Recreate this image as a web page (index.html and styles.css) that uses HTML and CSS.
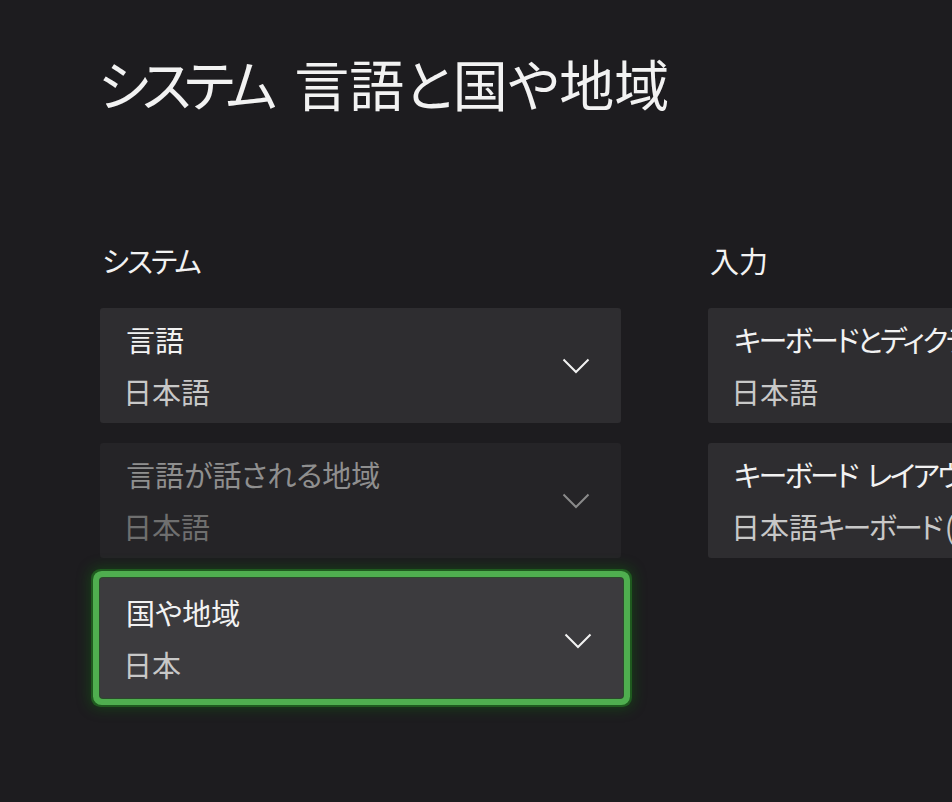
FILE: index.html
```html
<!DOCTYPE html>
<html lang="ja">
<head>
<meta charset="utf-8">
<title>システム 言語と国や地域</title>
<link rel="stylesheet" href="styles.css">
</head>
<body>
<div class="page">
  <h1 class="title"><span class="kana">システム</span><span>言語と国や地域</span></h1>
  <div class="columns">
    <section class="column">
      <h2 class="heading"><span class="kana">システム</span></h2>
      <div class="list">
        <div class="card">
          <div class="texts">
            <div class="label">言語</div>
            <div class="value">日本語</div>
          </div>
          <svg class="chev" width="28" height="16" viewBox="0 0 28 16"><path d="M1.5 1.5 L14 14 L26.5 1.5" fill="none" stroke="#f2f2f2" stroke-width="2"/></svg>
        </div>
        <div class="card disabled">
          <div class="texts">
            <div class="label">言語が話される地域</div>
            <div class="value">日本語</div>
          </div>
          <svg class="chev" width="28" height="16" viewBox="0 0 28 16"><path d="M1.5 1.5 L14 14 L26.5 1.5" fill="none" stroke="#8a8a8a" stroke-width="2"/></svg>
        </div>
        <div class="card focused">
          <div class="texts">
            <div class="label">国や地域</div>
            <div class="value">日本</div>
          </div>
          <svg class="chev" width="28" height="16" viewBox="0 0 28 16"><path d="M1.5 1.5 L14 14 L26.5 1.5" fill="none" stroke="#f2f2f2" stroke-width="2"/></svg>
        </div>
      </div>
    </section>
    <section class="column">
      <h2 class="heading">入力</h2>
      <div class="list">
        <div class="card">
          <div class="texts">
            <div class="label kana-tight">キーボードとディクテーション</div>
            <div class="value">日本語</div>
          </div>
        </div>
        <div class="card">
          <div class="texts">
            <div class="label kana-tight spaced">キーボード レイアウト</div>
            <div class="value">日本語<span class="kana-tight">キーボード (106/109 キー)</span></div>
          </div>
        </div>
      </div>
    </section>
  </div>
</div>
</body>
</html>
```
FILE: styles.css
```css
html, body {
  margin: 0;
  padding: 0;
  background: #1d1c1f;
  overflow: hidden;
  width: 952px;
  height: 802px;
}
body {
  font-family: "Noto Sans CJK JP", "Noto Sans", sans-serif;
  color: #f2f2f2;
}
.page {
  padding: 50px 0 0 100px;
}
.title {
  margin: 0 0 0 -2px;
  font-size: 55px;
  font-weight: 400;
  line-height: 64px;
  font-feature-settings: "palt";
  display: flex;
  gap: 24px;
  white-space: nowrap;
}
.title .kana {
  letter-spacing: -7px;
}
.columns {
  display: flex;
  gap: 87px;
  margin-top: 129px;
}
.column {
  flex: 0 0 521px;
  width: 521px;
}
.heading {
  margin: 0 0 31px 2px;
  font-size: 29px;
  font-weight: 400;
  line-height: 34px;
  font-feature-settings: "palt";
  color: #f2f2f2;
}
.heading .kana {
  letter-spacing: -2px;
}
.list {
  display: flex;
  flex-direction: column;
  gap: 20px;
}
.card {
  height: 115px;
  box-sizing: border-box;
  background: #2e2d30;
  border-radius: 3px;
  padding: 14px 31px 0 23px;
  display: flex;
  align-items: center;
  justify-content: space-between;
  white-space: nowrap;
}
.texts {
  align-self: flex-start;
}
.label {
  font-size: 29px;
  line-height: 34px;
  margin-left: 3px;
  color: #f2f2f2;
  font-feature-settings: "palt";
}
.value {
  font-size: 29px;
  line-height: 34px;
  margin-top: 18px;
  color: #c8c8c8;
  font-feature-settings: "palt";
}
.kana-tight {
  letter-spacing: -2.5px;
}
.spaced {
  word-spacing: 6px;
}
.chev {
  display: block;
  margin-top: -14px;
}
.card.disabled {
  background: #252427;
}
.card.disabled .label {
  color: #8f8f8f;
}
.card.disabled .value {
  color: #6f6f6f;
}
.card.focused {
  background: #3c3b3e;
  height: 120px;
  width: 523px;
  padding-top: 17px;
  border-radius: 3px;
  box-shadow:
    0 0 0 1px #2b4a2b,
    0 0 0 7px #4fae4f,
    0 0 0 9px #1f5a1f,
    0 0 14px 10px rgba(16, 110, 16, 0.45);
}
.card.focused .chev {
  margin-top: -12px;
}
```
